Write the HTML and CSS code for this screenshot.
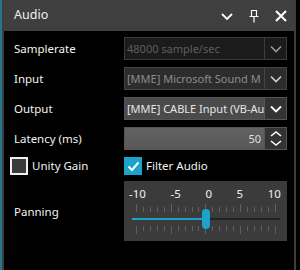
FILE: index.html
```html
<!DOCTYPE html>
<html>
<head>
<meta charset="utf-8">
<link rel="stylesheet" href="styles.css">
</head>
<body>
<div class="frame">
  <div class="window">
    <div class="titlebar">
      <span class="title">Audio</span>
      <div class="tbtns">
        <svg class="tbtn" width="14" height="14" viewBox="0 0 14 14"><polyline points="2,5 7,10 12,5" fill="none" stroke="#fff" stroke-width="1.8"/></svg>
        <svg class="tbtn" width="14" height="14" viewBox="0 0 14 14"><path d="M4.5 1.5h5v6h-5z M2.5 7.5h9 M7 7.5v6" fill="none" stroke="#fff" stroke-width="1.2"/></svg>
        <svg class="tbtn" width="14" height="14" viewBox="0 0 14 14"><path d="M2 2L12 12M12 2L2 12" fill="none" stroke="#fff" stroke-width="2"/></svg>
      </div>
    </div>
    <div class="body">
      <div class="form">
        <div class="label">Samplerate</div>
        <div class="combo disabled">
          <div class="ctext">48000 sample/sec</div>
          <div class="cbtn"><svg width="12" height="8" viewBox="0 0 12 8"><polyline points="1,1.5 6,6.5 11,1.5" fill="none" stroke="currentColor" stroke-width="1.6"/></svg></div>
        </div>
        <div class="label">Input</div>
        <div class="combo dim">
          <div class="ctext">[MME] Microsoft Sound M</div>
          <div class="cbtn"><svg width="12" height="8" viewBox="0 0 12 8"><polyline points="1,1.5 6,6.5 11,1.5" fill="none" stroke="currentColor" stroke-width="1.6"/></svg></div>
        </div>
        <div class="label">Output</div>
        <div class="combo active">
          <div class="ctext">[MME] CABLE Input (VB-Au</div>
          <div class="cbtn"><svg width="12" height="8" viewBox="0 0 12 8"><polyline points="1,1.5 6,6.5 11,1.5" fill="none" stroke="currentColor" stroke-width="1.8"/></svg></div>
        </div>
        <div class="label">Latency (ms)</div>
        <div class="combo spin">
          <div class="ctext num">50</div>
          <div class="cbtn spinbtn">
            <svg width="12" height="6" viewBox="0 0 12 6"><polyline points="1,5 6,1 11,5" fill="none" stroke="currentColor" stroke-width="1.5"/></svg>
            <svg width="12" height="6" viewBox="0 0 12 6"><polyline points="1,1 6,5 11,1" fill="none" stroke="currentColor" stroke-width="1.5"/></svg>
          </div>
        </div>
        <div class="check first">
          <span class="box"></span><span>Unity Gain</span>
        </div>
        <div class="check">
          <span class="box on"><svg width="15" height="15" viewBox="0 0 15 15"><polyline points="2.5,7.5 6,11 12.5,3.5" fill="none" stroke="#fff" stroke-width="2"/></svg></span><span>Filter Audio</span>
        </div>
        <div class="label">Panning</div>
        <div class="slider">
          <div class="scale">
            <span>-10</span><span>-5</span><span>0</span><span>5</span><span>10</span>
          </div>
          <div class="ticks">
            <i class="maj"></i><i></i><i></i><i></i><i></i><i class="maj"></i><i></i><i></i><i></i><i></i><i class="maj"></i><i></i><i></i><i></i><i></i><i class="maj"></i><i></i><i></i><i></i><i></i><i class="maj"></i>
          </div>
          <div class="track">
            <div class="fill"></div>
            <div class="thumb"></div>
          </div>
          <div class="ticks bottom">
            <i class="maj"></i><i></i><i></i><i></i><i></i><i class="maj"></i><i></i><i></i><i></i><i></i><i class="maj"></i><i></i><i></i><i></i><i></i><i class="maj"></i><i></i><i></i><i></i><i></i><i class="maj"></i>
          </div>
        </div>
      </div>
    </div>
  </div>
</div>
</body>
</html>
```
FILE: styles.css
```css
html, body {
  margin: 0;
  padding: 0;
  background: #000;
  width: 300px;
  height: 270px;
  overflow: hidden;
}
body {
  font-family: "Noto Sans", "Open Sans", sans-serif;
  font-size: 11.5px;
  line-height: 16px;
  color: #fff;
}
.frame {
  width: 296px;
  height: 270px;
  box-sizing: border-box;
  border-left: 2px solid #26778c;
}
.window {
  height: 100%;
  box-sizing: border-box;
  border-left: 2px solid #3d3d3d;
  border-right: 2px solid #3d3d3d;
  display: flex;
  flex-direction: column;
}
.titlebar {
  height: 31px;
  flex: none;
  background: #3f3f3f;
  display: flex;
  align-items: center;
  justify-content: space-between;
  padding: 0 6px 0 10px;
}
.title {
  font-size: 12.5px;
  color: #f0f0f0;
  position: relative;
  top: -1px;
}
.tbtns {
  display: flex;
  gap: 13px;
  align-items: center;
}
.tbtn {
  display: block;
}
.body {
  flex: 1;
  background: #000;
  padding-top: 6px;
}
.form {
  display: grid;
  grid-template-columns: 120px 163px;
  row-gap: 7px;
  align-items: center;
}
.label {
  padding-left: 10px;
  color: #f2f2f2;
}
.combo {
  height: 23px;
  box-sizing: border-box;
  border: 1px solid #3c3c3c;
  display: flex;
  align-items: stretch;
  font-size: 11px;
}
.ctext {
  flex: 1;
  padding-left: 2px;
  display: flex;
  align-items: center;
  white-space: nowrap;
  overflow: hidden;
}
.cbtn {
  width: 21px;
  flex: none;
  border-left: 1px solid #3c3c3c;
  display: flex;
  align-items: center;
  justify-content: center;
}
.disabled {
  background: #1b1b1b;
  color: #5e5e5e;
}
.disabled .cbtn {
  color: #9a9a9a;
}
.dim {
  background: #2c2c2c;
  color: #8c8c8c;
  border-color: #444;
}
.dim .cbtn {
  color: #d0d0d0;
  border-left-color: #444;
}
.active {
  background: #4b4b4b;
  color: #e6e6e6;
  border-color: #555;
}
.active .cbtn {
  background: #333;
  color: #fff;
  border-left-color: #555;
}
.spin {
  background: linear-gradient(#626262, #575757);
  color: #dedede;
  border-color: #555;
}
.num {
  justify-content: flex-end;
  padding-right: 3px;
}
.spinbtn {
  background: #333;
  color: #fff;
  flex-direction: column;
  gap: 3px;
  border-left-color: #555;
}
.spinbtn svg {
  display: block;
}
.check {
  display: flex;
  align-items: center;
  gap: 4px;
  height: 18px;
  color: #f2f2f2;
  font-size: 11.5px;
}
.check.first {
  padding-left: 6px;
}
.box {
  width: 18px;
  height: 18px;
  box-sizing: border-box;
  border: 2px solid #f0f0f0;
  background: #3a3a3a;
  display: flex;
  align-items: center;
  justify-content: center;
}
.box.on {
  border: none;
  background: #1ba3cc;
}
.box svg {
  display: block;
}
.slider {
  height: 60px;
  background: #3b3b3b;
  box-sizing: border-box;
  padding: 4px 6px 0 5px;
  margin-top: -1px;
}
.scale {
  display: flex;
  justify-content: space-between;
  font-size: 11.5px;
  color: #f0f0f0;
  height: 17px;
  line-height: 17px;
}
.ticks {
  display: flex;
  justify-content: space-between;
  align-items: flex-end;
  height: 8px;
  margin-top: 2px;
  padding: 0 5px 0 7px;
}
.ticks i {
  display: block;
  width: 1px;
  height: 5px;
  background: #5f5f5f;
}
.ticks i.maj {
  height: 8px;
}
.ticks.bottom {
  align-items: flex-start;
  margin-top: 0;
}
.track {
  position: relative;
  height: 14px;
  margin: 0 1px 0 3px;
}
.track::before {
  content: "";
  position: absolute;
  left: 0;
  right: 0;
  top: 6px;
  height: 2px;
  background: #222;
}
.fill {
  position: absolute;
  left: 0;
  width: 74px;
  top: 6px;
  height: 2px;
  background: #1ba3cc;
}
.thumb {
  position: absolute;
  left: 70px;
  top: -3px;
  width: 8px;
  height: 20px;
  border-radius: 4px;
  background: #1ba3cc;
}
```
